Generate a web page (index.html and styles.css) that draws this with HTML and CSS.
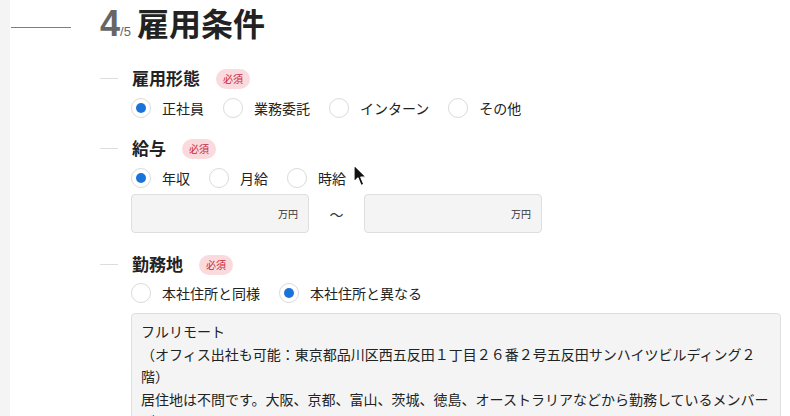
FILE: index.html
```html
<!DOCTYPE html>
<html lang="ja">
<head>
<meta charset="utf-8">
<link rel="stylesheet" href="styles.css">
</head>
<body>
<div class="page">
  <div class="rail"></div>
  <div class="main">
    <div class="header">
      <span class="header-line"></span>
      <h1 class="title"><span class="step">4</span><span class="step-total">/5</span><span class="title-text">雇用条件</span></h1>
    </div>

    <div class="section-head first">
      <span class="dash"></span>
      <span class="label">雇用形態</span>
      <span class="badge">必須</span>
    </div>
    <div class="radio-row">
      <span class="radio checked"></span><span class="radio-label">正社員</span>
      <span class="radio"></span><span class="radio-label">業務委託</span>
      <span class="radio"></span><span class="radio-label">インターン</span>
      <span class="radio"></span><span class="radio-label">その他</span>
    </div>

    <div class="section-head second">
      <span class="dash"></span>
      <span class="label">給与</span>
      <span class="badge">必須</span>
    </div>
    <div class="radio-row">
      <span class="radio checked"></span><span class="radio-label">年収</span>
      <span class="radio"></span><span class="radio-label">月給</span>
      <span class="radio"></span><span class="radio-label">時給</span>
    </div>
    <div class="range-row">
      <div class="input"><span class="unit">万円</span></div>
      <span class="tilde">〜</span>
      <div class="input"><span class="unit">万円</span></div>
    </div>

    <div class="section-head third">
      <span class="dash"></span>
      <span class="label">勤務地</span>
      <span class="badge">必須</span>
    </div>
    <div class="radio-row row3">
      <span class="radio"></span><span class="radio-label">本社住所と同様</span>
      <span class="radio checked"></span><span class="radio-label">本社住所と異なる</span>
    </div>
    <div class="textarea">フルリモート<br>（オフィス出社も可能：東京都品川区西五反田１丁目２６番２号五反田サンハイツビルディング２階）<br>居住地は不問です。大阪、京都、富山、茨城、徳島、オーストラリアなどから勤務しているメンバーがいます。</div>
  </div>
</div>
<svg class="cursor" width="16" height="24" viewBox="0 0 16 24" xmlns="http://www.w3.org/2000/svg">
  <path d="M1 1 L1 18 L5 14 L8 21.5 L10.8 20.3 L7.8 13.2 L13.2 13.2 Z" fill="#111" stroke="#fff" stroke-width="1.2" stroke-linejoin="round"/>
</svg>
</body>
</html>
```

FILE: styles.css
```css
html, body {
  margin: 0;
  padding: 0;
  background: #fff;
  width: 790px;
  height: 416px;
  overflow: hidden;
}
body {
  font-family: "Noto Sans CJK JP", "Noto Sans", sans-serif;
  color: #222;
  position: relative;
}
.page {
  display: flex;
  height: 416px;
}
.rail {
  width: 10px;
  flex: none;
  background: #f4f4f4;
}
.main {
  flex: 1;
  display: flex;
  flex-direction: column;
  padding-top: 7px;
}
.main > * {
  flex: none;
}
.header {
  display: flex;
  align-items: center;
  height: 40px;
}
.header-line {
  align-self: flex-start;
  margin-top: 20px;
  width: 60px;
  height: 1px;
  background: #4f86d4;
  margin-left: 1px;
  margin-right: 29px;
}
.title {
  margin: 0;
  display: flex;
  align-items: baseline;
  line-height: 40px;
  font-weight: 700;
}
.step {
  font-family: "Liberation Sans", Arial, sans-serif;
  font-size: 36px;
  color: #666;
}
.step-total {
  font-family: "Liberation Sans", Arial, sans-serif;
  font-size: 13px;
  font-weight: 400;
  color: #666;
  margin-right: 6px;
}
.title-text {
  font-size: 32px;
  color: #222;
}
.section-head {
  display: flex;
  align-items: center;
  height: 24px;
  margin-left: 90px;
}
.section-head.first { margin-top: 19px; }
.section-head.second { margin-top: 16px; }
.section-head.third { margin-top: 19px; }
.dash {
  align-self: flex-start;
  margin-top: 12px;
  width: 18px;
  height: 1px;
  background: #ddd;
  margin-right: 14px;
}
.label {
  font-size: 17px;
  font-weight: 700;
  line-height: 24px;
}
.badge {
  margin-left: 16px;
  width: 34px;
  height: 20px;
  border-radius: 10px;
  background: #fadadd;
  color: #c8283c;
  font-size: 10px;
  line-height: 20px;
  text-align: center;
  margin-top: 2px;
}
.radio-row {
  display: flex;
  align-items: center;
  height: 24px;
  margin-top: 6px;
  margin-left: 121px;
}
.radio-row.row3 { margin-top: 5px; }
.radio {
  width: 20px;
  height: 20px;
  box-sizing: border-box;
  border: 1px solid #dcdcdc;
  border-radius: 50%;
  background: #fff;
  display: flex;
  align-items: center;
  justify-content: center;
  flex: none;
  box-shadow: 0 0 1px rgba(0,0,0,0.04);
}
.radio.checked::after {
  content: "";
  width: 10px;
  height: 10px;
  border-radius: 50%;
  background: #1a73d9;
}
.radio-label {
  font-size: 14px;
  line-height: 20px;
  margin-left: 11px;
  margin-right: 19px;
}
.range-row {
  display: flex;
  align-items: center;
  margin-top: 4px;
  margin-left: 121px;
}
.input {
  width: 178px;
  height: 39px;
  box-sizing: border-box;
  background: #f4f4f4;
  border: 1px solid #dedede;
  border-radius: 4px;
  display: flex;
  align-items: center;
  justify-content: flex-end;
  padding-right: 10px;
}
.unit {
  font-size: 10px;
  color: #333;
}
.tilde {
  width: 55px;
  text-align: center;
  font-size: 14px;
  color: #333;
}
.textarea {
  margin-top: 8px;
  margin-left: 121px;
  width: 650px;
  height: 140px;
  box-sizing: border-box;
  background: #f4f4f4;
  border: 1px solid #dedede;
  border-radius: 4px;
  padding: 6px 6px 8px 9px;
  font-size: 14px;
  line-height: 22.5px;
  color: #222;
}
.cursor {
  position: absolute;
  left: 353px;
  top: 164px;
}
```
